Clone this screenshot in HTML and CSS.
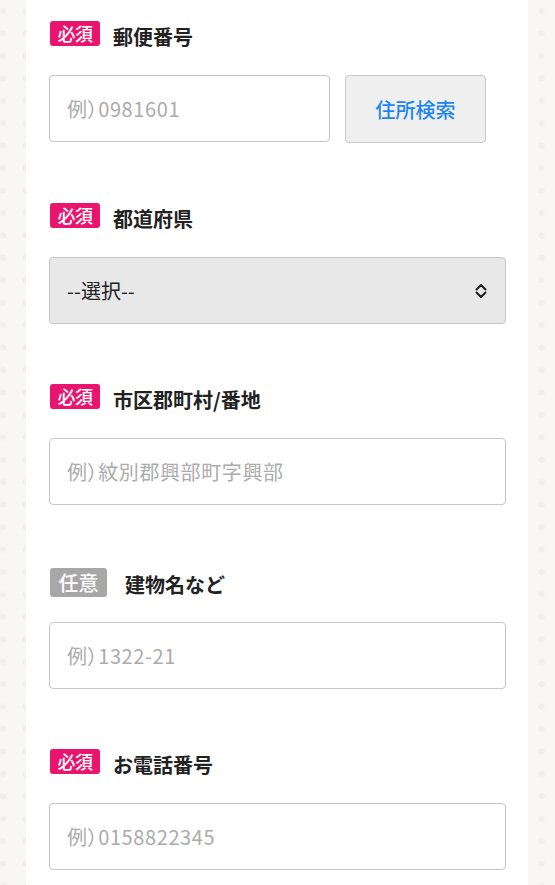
FILE: index.html
```html
<!DOCTYPE html>
<html lang="ja">
<head>
<meta charset="utf-8">
<title>お届け先入力</title>
<link rel="stylesheet" href="styles.css">
</head>
<body>
<div class="page">
  <form class="card">
    <div class="field">
      <div class="field-head">
        <span class="badge badge--req">必須</span>
        <span class="label">郵便番号</span>
      </div>
      <div class="zip-row">
        <input class="input input--zip" type="text" placeholder="例）0981601">
        <button class="btn-search" type="button">住所検索</button>
      </div>
    </div>

    <div class="field">
      <div class="field-head">
        <span class="badge badge--req">必須</span>
        <span class="label">都道府県</span>
      </div>
      <div class="select-wrap">
        <select class="select">
          <option>--選択--</option>
        </select>
        <svg class="select-icon" width="12" height="16" viewBox="0 0 12 16" aria-hidden="true">
          <path d="M1.5 6.5 L6 2 L10.5 6.5" fill="none" stroke="#1f1f1f" stroke-width="2" stroke-linecap="round" stroke-linejoin="round"/>
          <path d="M1.5 9.5 L6 14 L10.5 9.5" fill="none" stroke="#1f1f1f" stroke-width="2" stroke-linecap="round" stroke-linejoin="round"/>
        </svg>
      </div>
    </div>

    <div class="field">
      <div class="field-head">
        <span class="badge badge--req">必須</span>
        <span class="label">市区郡町村/番地</span>
      </div>
      <input class="input" type="text" placeholder="例）紋別郡興部町字興部">
    </div>

    <div class="field field--opt">
      <div class="field-head">
        <span class="badge badge--opt">任意</span>
        <span class="label label--opt">建物名など</span>
      </div>
      <input class="input" type="text" placeholder="例）1322-21">
    </div>

    <div class="field">
      <div class="field-head">
        <span class="badge badge--req">必須</span>
        <span class="label">お電話番号</span>
      </div>
      <input class="input" type="text" placeholder="例）0158822345">
    </div>
  </form>
</div>
</body>
</html>
```

FILE: styles.css
```css
* {
  box-sizing: border-box;
}

html, body {
  margin: 0;
  padding: 0;
}

body {
  font-family: "Noto Sans CJK JP", "Noto Sans", sans-serif;
  background-color: #f8f7f5;
  background-image: radial-gradient(circle, #f0efec 2.8px, transparent 3.4px);
  background-size: 22.45px 22.45px;
  background-position: -8.2px -0.2px;
  min-height: 885px;
}

.page {
  min-height: 885px;
}

.card {
  width: 502px;
  min-height: 885px;
  margin: 0 0 0 26px;
  background: #ffffff;
  padding: 21px 22px 40px 23px;
}

.field + .field {
  margin-top: 60px;
}

.field.field--opt {
  margin-top: 63px;
}

.field-head {
  display: flex;
  align-items: flex-start;
  height: 25px;
  margin-bottom: 29px;
}

.badge {
  display: block;
  flex: none;
  color: #ffffff;
  border-radius: 3px;
  text-align: center;
  margin-left: 1px;
}

.badge--req {
  width: 50px;
  height: 25px;
  background: #e8146e;
  font-size: 18px;
  font-weight: 500;
  line-height: 25px;
  letter-spacing: -0.5px;
}

.badge--opt {
  width: 57px;
  height: 29px;
  background: #a7a7a7;
  font-size: 20px;
  font-weight: 500;
  line-height: 29px;
}

.label {
  font-size: 20px;
  line-height: 20px;
  font-weight: 700;
  color: #222222;
  margin-left: 13px;
  margin-top: 6px;
}

.label.label--opt {
  margin-left: 18px;
  margin-top: 7px;
}

.input {
  display: block;
  width: 100%;
  height: 67px;
  border: 1px solid #c6c6c6;
  border-radius: 4px;
  background: #ffffff;
  padding: 0 17px;
  font-family: "Noto Sans CJK JP", "Noto Sans", sans-serif;
  font-size: 20px;
  font-feature-settings: "palt";
  letter-spacing: 0.6px;
  color: #222222;
  outline: none;
}

.input::placeholder {
  color: #ababab;
}

.zip-row {
  display: flex;
  align-items: flex-start;
  gap: 15px;
}

.input.input--zip {
  width: 281px;
  flex: none;
}

.btn-search {
  width: 141px;
  height: 68px;
  flex: none;
  border: 1px solid #c9c9c9;
  border-radius: 4px;
  background: #efefef;
  color: #1b86ee;
  font-family: "Noto Sans CJK JP", "Noto Sans", sans-serif;
  font-size: 20px;
  font-weight: 500;
  padding: 0;
}

.select-wrap {
  position: relative;
}

.select {
  display: block;
  width: 100%;
  height: 67px;
  border: 1px solid #c6c6c6;
  border-radius: 4px;
  background: #e8e8e8;
  padding: 0 17px;
  font-family: "Noto Sans CJK JP", "Noto Sans", sans-serif;
  font-size: 20px;
  color: #222222;
  appearance: none;
  -webkit-appearance: none;
  outline: none;
}

.select-icon {
  position: absolute;
  right: 19px;
  top: 26px;
  pointer-events: none;
}
```
